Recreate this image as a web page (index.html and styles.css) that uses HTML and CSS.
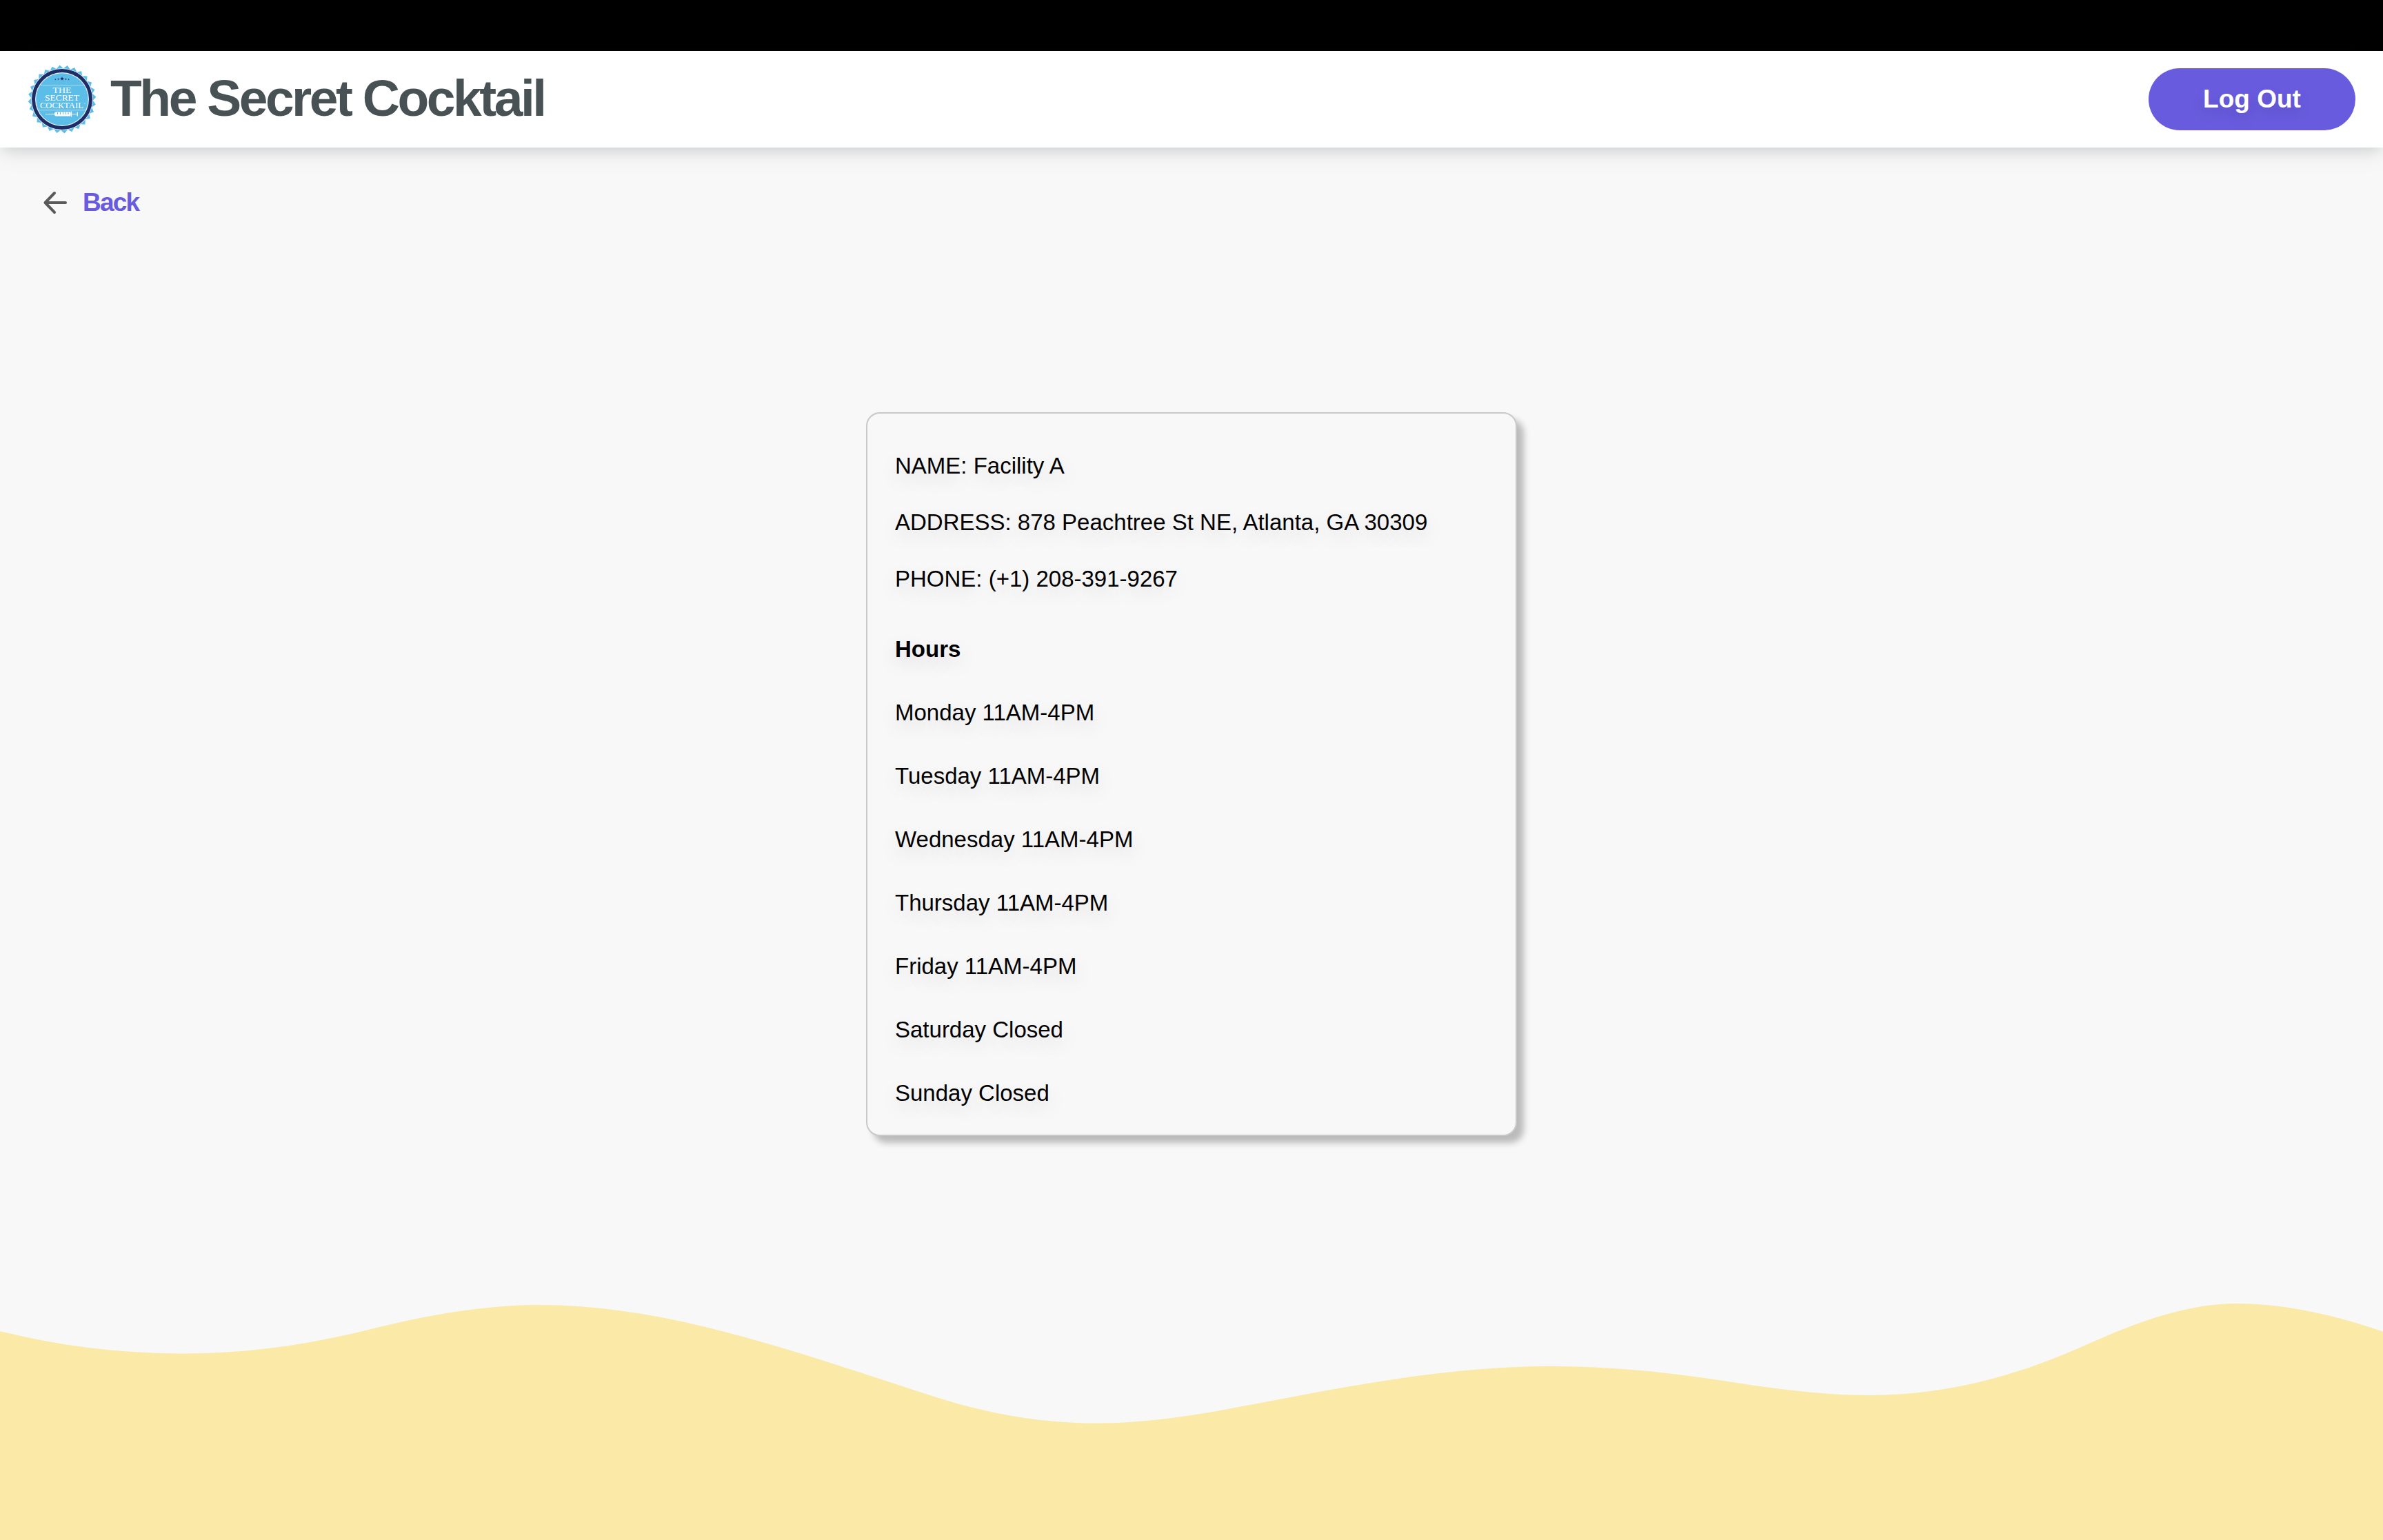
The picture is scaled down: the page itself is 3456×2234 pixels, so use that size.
FILE: index.html
```html
<!DOCTYPE html>
<html lang="en">
<head>
<meta charset="utf-8">
<title>The Secret Cocktail</title>
<link rel="stylesheet" href="styles.css">
</head>
<body>
<div class="notch"></div>
<header class="header">
  <div class="brand">
    <svg class="logo" viewBox="-50 -50 100 100" aria-hidden="true">
      <defs>
        <rect id="tooth" x="-35" y="-35" width="70" height="70"/>
        <path id="star" d="M0-3 .8-1 3-.9 1.2.5 1.8 2.6 0 1.4-1.8 2.6-1.2.5-3-.9-.8-1Z"/>
      </defs>
      <g fill="#5cbde8">
        <use href="#tooth" transform="rotate(41)"/>
        <use href="#tooth" transform="rotate(53.86)"/>
        <use href="#tooth" transform="rotate(66.71)"/>
        <use href="#tooth" transform="rotate(79.57)"/>
        <use href="#tooth" transform="rotate(92.43)"/>
        <use href="#tooth" transform="rotate(105.29)"/>
        <use href="#tooth" transform="rotate(118.14)"/>
      </g>
      <circle r="44.8" fill="#e4f3fb"/>
      <circle r="44" fill="#1f2d66"/>
      <circle r="39" fill="#e4f3fb"/>
      <circle r="37.8" fill="#5cbde8"/>
      <g fill="#1f2d66">
        <use href="#star" y="-30"/>
        <use href="#star" transform="translate(-5.4 -29.3) scale(.5)"/>
        <use href="#star" transform="translate(5.4 -29.3) scale(.5)"/>
        <use href="#star" transform="translate(-9.6 -28.8) scale(.42)"/>
        <use href="#star" transform="translate(9.6 -28.8) scale(.42)"/>
      </g>
      <path d="M-31-20.5H31M-34 15.8H34" stroke="#b9e2f6" stroke-width=".8"/>
      <g class="logo-text">
        <text y="-9.3" textLength="27" lengthAdjust="spacingAndGlyphs" x="0">THE</text>
        <text y="2.1" textLength="50" lengthAdjust="spacingAndGlyphs" x="0">SECRET</text>
        <text y="13.4" textLength="63" lengthAdjust="spacingAndGlyphs" x="-.6">COCKTAIL</text>
      </g>
      <circle cx="33" cy="6" r=".8" fill="#b9e2f6"/>
      <path d="M-24 21.5H-11M12 21.5H22M22.3 18.5V24.5M13.5 17.5V25.5" stroke="#fff" stroke-width="1.2"/>
      <path d="M-11 19.8-9 18.2H12.5V24.6H-9L-11 23.2Z" fill="#fff"/>
      <path d="M-6.5 18.8V22M-2.5 18.8V22M1.5 18.8V22M5.5 18.8V22M9 18.8V22" stroke="#5cbde8" stroke-width="1.1"/>
    </svg>
    <h1 class="title">The Secret Cocktail</h1>
  </div>
  <button class="logout">Log Out</button>
</header>
<main class="main">
  <a class="back">
    <svg class="arrow" viewBox="0 0 48 48" aria-hidden="true"><path d="M38 24H10M22 10 8.500 24 22 38"/></svg>
    <span>Back</span>
  </a>
  <section class="card">
    <p class="info">NAME: Facility A</p>
    <p class="info">ADDRESS: 878 Peachtree St NE, Atlanta, GA 30309</p>
    <p class="info">PHONE: (+1) 208-391-9267</p>
    <h2 class="hours">Hours</h2>
    <ul class="days">
      <li>Monday 11AM-4PM</li>
      <li>Tuesday 11AM-4PM</li>
      <li>Wednesday 11AM-4PM</li>
      <li>Thursday 11AM-4PM</li>
      <li>Friday 11AM-4PM</li>
      <li>Saturday Closed</li>
      <li>Sunday Closed</li>
    </ul>
  </section>
</main>
<svg class="wave" viewBox="0 1880 3456 354" preserveAspectRatio="none" aria-hidden="true">
  <path fill="#fbe9a7" d="M0 1931C89.300 1953.300 178.700 1963.500 268 1963.500S442.700 1951.800 530 1930C614.300 1908.900 698.700 1893 783 1893C974.700 1893 1166.300 1965.700 1358 2027C1435.300 2051.700 1512.700 2064.500 1590 2064.500C1683.700 2064.500 1777.300 2044.800 1871 2027C1996.700 2003.100 2122.300 1982 2248 1982C2331.700 1982 2415.300 1990 2499 2003C2570 2014 2641 2024 2712 2024C2815.700 2024 2919.300 1998.700 3023 1952C3096.700 1918.900 3170.300 1891 3244 1891C3314.700 1891 3385.300 1908 3456 1931.500V2234H0Z"/>
</svg>
</body>
</html>
```
FILE: styles.css
```css
* { box-sizing: border-box; }

body {
  margin: 0;
  height: 2234px;
  display: flex;
  flex-direction: column;
  overflow: hidden;
  background: #f8f8f8;
  color: #000;
  font-family: "Liberation Sans", Arial, sans-serif;
  font-size: 33px;
}

h1, h2, p, ul { margin: 0; padding: 0; }

.notch { height: 74px; background: #000; flex: none; }

.header {
  flex: none;
  height: 140px;
  padding: 0 40px;
  display: flex;
  align-items: center;
  justify-content: space-between;
  background: #fff;
  box-shadow: 0 8px 20px -4px rgba(60, 70, 78, .2), 0 8px 40px rgba(60, 80, 75, .06);
}

.brand { display: flex; align-items: center; gap: 20px; }
.logo { width: 100px; height: 100px; display: block; }

.logo-text {
  fill: #fff;
  font-family: "Liberation Serif", serif;
  font-size: 12.5px;
  text-anchor: middle;
}

.title {
  padding-bottom: 4px;
  color: #485254;
  font-size: 75px;
  line-height: 136px;
  letter-spacing: -3.5px;
}

.logout {
  width: 300px;
  height: 90px;
  padding: 0;
  border: 0;
  border-radius: 45px;
  background: #685bdd;
  color: #fff;
  font: bold 37px/90px "Liberation Sans", Arial, sans-serif;
  text-shadow: 0 8px 20px rgba(0, 0, 0, .1);
}

.main {
  flex: 1;
  display: flex;
  flex-direction: column;
}

.back {
  align-self: flex-start;
  display: flex;
  align-items: center;
  gap: 15px;
  height: 60px;
  margin: 50px 0 0 57px;
  color: #685bdd;
  font-size: 37px;
  font-weight: bold;
  letter-spacing: -1.8px;
}

.arrow {
  width: 48px;
  height: 48px;
  fill: none;
  stroke: #5a5a5a;
  stroke-width: 4;
  stroke-linecap: round;
  stroke-linejoin: round;
}

.card {
  align-self: center;
  width: 944px;
  height: 1050px;
  margin-top: 274px;
  padding: 35px 39px 0 40px;
  border: 2px solid #c9c9c9;
  border-radius: 20px;
  background: #f8f8f8;
  box-shadow: 10px 10px 10px #bbb;
  text-shadow: 0 10px 28px rgba(0, 0, 0, .15);
}

.info { line-height: 82px; }

.hours {
  margin-top: 15px;
  font-size: 33px;
  line-height: 92px;
}

.days { list-style: none; line-height: 92px; }

.wave { flex: none; display: block; width: 100%; height: 354px; }
```
